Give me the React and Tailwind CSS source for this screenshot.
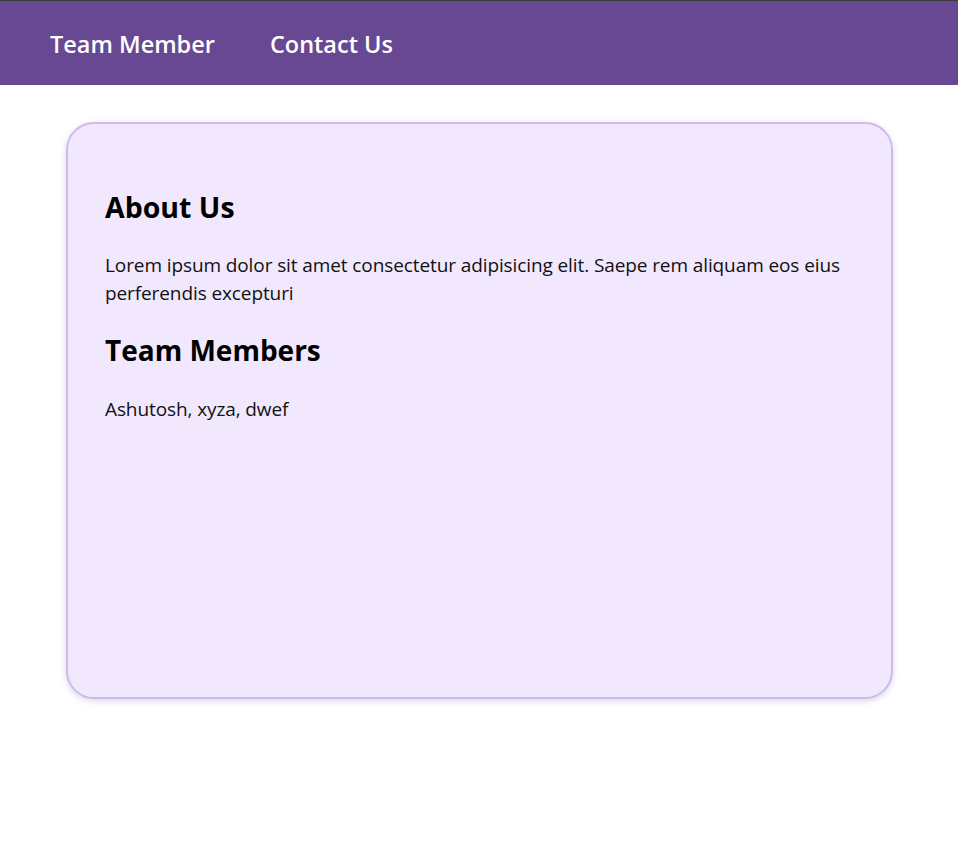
export default function App() {
  return (
    <div className="min-h-[842px] bg-white" style={{ fontFamily: '"Open Sans", "Noto Sans", sans-serif' }}>
      {/* NAV */}
      <nav className="h-[85px] bg-[#694893] border-t border-[#3b3b3b] flex items-center px-[50px] pt-[4px] gap-[55px]">
        <a className="text-white text-[23.5px] font-semibold">Team Member</a>
        <a className="text-white text-[23.5px] font-semibold">Contact Us</a>
      </nav>

      {/* CARD */}
      <div className="ml-[66px] mr-[65px] mt-[37px] h-[577px] bg-[#f1e8fe] border-2 border-[#cdbcea] rounded-[28px] shadow-[0_2px_6px_rgba(120,80,180,0.25)] px-[37px] pt-[65px]">
        <h2 className="text-[28.5px] leading-[36px] font-bold text-black">About Us</h2>
        <p className="mt-[26px] text-[19px] leading-[28px] text-[#111] tracking-[-0.1px]">
          Lorem ipsum dolor sit amet consectetur adipisicing elit. Saepe rem aliquam eos eius perferendis excepturi
        </p>
        <h2 className="mt-[25px] text-[28px] leading-[36px] font-bold text-black">Team Members</h2>
        <p className="mt-[27px] text-[19px] leading-[28px] text-[#111] tracking-[-0.1px]">Ashutosh, xyza, dwef</p>
      </div>
    </div>
  );
}
